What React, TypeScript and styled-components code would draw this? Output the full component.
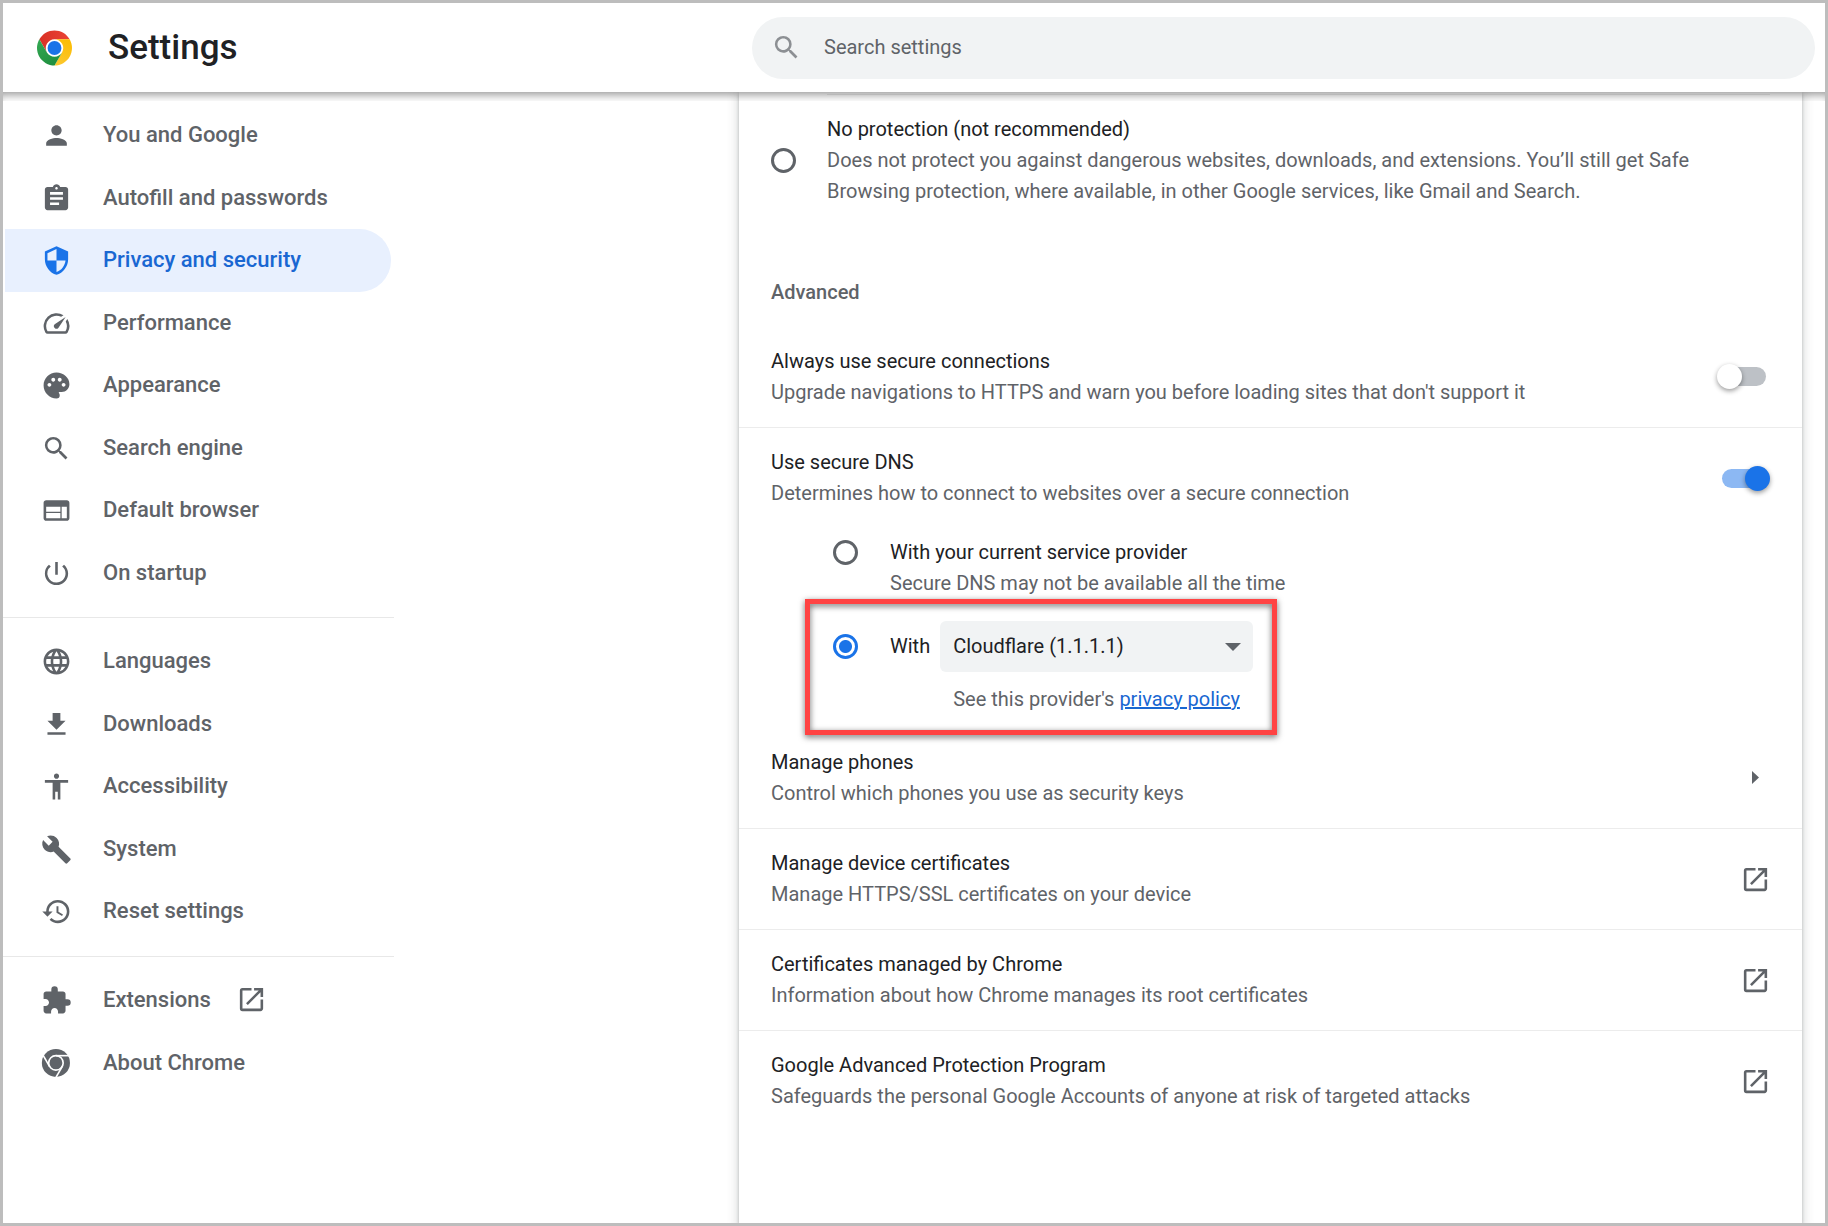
import React, { useState } from "react";
import styled, { createGlobalStyle } from "styled-components";
import type { IconType } from "react-icons";
import {
  MdAccessibility,
  MdAssignment,
  MdBuild,
  MdExtension,
  MdLanguage,
  MdOpenInNew,
  MdPalette,
  MdPerson,
  MdPowerSettingsNew,
  MdRestore,
  MdSearch,
  MdSecurity,
  MdSpeed,
  MdWeb,
} from "react-icons/md";

const color = {
  frame: "#bdbdbd",
  text: "#202124",
  muted: "#5f6368",
  blue: "#1a73e8",
  link: "#1967d2",
  selected: "#e8f0fe",
  field: "#f1f3f4",
  line: "#ececec",
  marker: "#ff4343",
};

const GlobalStyle = createGlobalStyle`
  *, *::before, *::after { box-sizing: border-box; }
  body {
    margin: 0;
    background: #fff;
    color: ${color.text};
    font: 400 20px/31px Roboto, "Liberation Sans", sans-serif;
  }
`;

const Page = styled.div`
  display: flex;
  flex-direction: column;
  height: 100vh;
  border: 3px solid ${color.frame};
  overflow: hidden;
`;

const Header = styled.header`
  position: relative;
  z-index: 1;
  flex: none;
  display: flex;
  align-items: center;
  justify-content: space-between;
  height: 89px;
  padding: 0 10px 0 34px;
  background: #fff;

  &::after {
    content: "";
    position: absolute;
    top: 100%;
    left: 0;
    right: 0;
    height: 9px;
    box-shadow: inset 0 8px 9px -5px rgba(0, 0, 0, 0.4);
    pointer-events: none;
  }
`;

const Brand = styled.div`
  display: flex;
  align-items: center;
  gap: 36px;
`;

const Title = styled.h1`
  margin: 0;
  font-size: 35px;
  line-height: 40px;
  font-weight: 500;
`;

const SearchField = styled.label`
  display: flex;
  align-items: center;
  gap: 22px;
  flex: 0 1 1063px;
  height: 62px;
  padding: 0 31px 0 19px;
  border-radius: 31px;
  background: ${color.field};
  color: #8c8f93;

  svg {
    flex: none;
  }
`;

const SearchInput = styled.input`
  flex: 1;
  min-width: 0;
  padding: 0;
  border: 0;
  outline: 0;
  background: transparent;
  color: ${color.text};
  font: inherit;

  &::placeholder {
    color: ${color.muted};
    opacity: 1;
  }
`;

const Body = styled.div`
  flex: 1;
  min-height: 0;
  display: flex;
  justify-content: space-between;
`;

const Sidebar = styled.nav`
  flex: none;
  width: 391px;
  padding-top: 12px;
`;

const MenuGroup = styled.ul`
  margin: 0;
  padding: 0 3px 0 2px;
  list-style: none;

  & + & {
    margin-top: 13px;
    padding-top: 12px;
    border-top: 1px solid #e8e8e8;
  }
`;

const MenuItem = styled.li`
  display: flex;
  height: 62px;

  &:nth-child(odd) {
    height: 63px;
  }
`;

const MenuLink = styled.a<{ $selected?: boolean }>`
  flex: 1;
  display: flex;
  align-items: center;
  gap: 31px;
  padding-left: 36px;
  border-radius: 0 32px 32px 0;
  background: ${(p) => (p.$selected ? color.selected : "transparent")};
  color: ${(p) => (p.$selected ? color.link : color.muted)};
  font-size: 22px;
  font-weight: 500;
  text-decoration: none;

  svg {
    flex: none;
    color: ${(p) => (p.$selected ? color.blue : color.muted)};
  }
`;

const MenuLabel = styled.span`
  display: flex;
  align-items: center;
  gap: 25px;
  padding-bottom: 2px;
`;

const Card = styled.main`
  flex: 0 1 1063px;
  margin-right: 23px;
  background: #fff;
  box-shadow: 0 2px 3px rgba(60, 64, 67, 0.3), 0 3px 9px 3px rgba(60, 64, 67, 0.15);
`;

const ProtectionOption = styled.label`
  display: flex;
  align-items: center;
  gap: 31px;
  padding: 2px 32px 0;
`;

const ProtectionText = styled.span`
  flex: 1;
  padding: 19px 48px 19px 0;
  border-top: 1px solid ${color.line};
`;

const Primary = styled.span`
  display: block;
  color: ${color.text};
`;

const Secondary = styled.span`
  display: block;
  color: ${color.muted};
`;

const Radio = styled.input`
  appearance: none;
  flex: none;
  width: 25px;
  height: 25px;
  margin: 0;
  border: 3px solid ${color.muted};
  border-radius: 50%;

  &:checked {
    border-color: ${color.blue};
    background: radial-gradient(circle, ${color.blue} 6px, transparent 7px);
  }
`;

const SectionTitle = styled.h2`
  margin: 51px 32px 18px;
  color: ${color.muted};
  font-size: 20px;
  line-height: 31px;
  font-weight: 500;
`;

const Row = styled.div<{ $divided?: boolean }>`
  display: flex;
  align-items: center;
  justify-content: space-between;
  width: 100%;
  min-height: 101px;
  padding: 0 31px 0 32px;
  border: solid ${color.line};
  border-width: ${(p) => (p.$divided ? "1px 0 0" : "0")};
  background: none;
  color: ${color.muted};
  font: inherit;
  text-align: left;
  text-decoration: none;

  svg {
    flex: none;
  }
`;

const Switch = styled.input`
  appearance: none;
  position: relative;
  flex: none;
  width: 44px;
  height: 19px;
  margin: 0 5px;
  border-radius: 10px;
  background: #bdc1c6;

  &::after {
    content: "";
    position: absolute;
    top: -3px;
    left: -5px;
    width: 25px;
    height: 25px;
    border-radius: 50%;
    background: #fff;
    box-shadow: 0 2px 5px rgba(0, 0, 0, 0.4);
  }

  &:checked {
    background: #8cb8f3;
  }

  &:checked::after {
    left: 23px;
    background: ${color.blue};
  }
`;

const ArrowSlot = styled.span`
  display: flex;
  justify-content: center;
  width: 31px;
`;

const DnsOptions = styled.div`
  display: flex;
  flex-direction: column;
  align-items: flex-start;
  gap: 22px;
  padding: 9px 32px 12px 94px;
`;

const DnsOption = styled.div`
  display: flex;
  align-items: flex-start;
  gap: 32px;
`;

const FirstLine = styled.span<{ $tall?: boolean }>`
  display: flex;
  align-items: center;
  height: ${(p) => (p.$tall ? "51px" : "31px")};
`;

const CustomDns = styled(DnsOption)`
  position: relative;

  /* Marker frame drawn round the chosen provider. */
  &::after {
    content: "";
    position: absolute;
    inset: -22px -24px -20px -28px;
    border: 5px solid ${color.marker};
    filter: drop-shadow(0 2px 3px rgba(0, 0, 0, 0.6));
    pointer-events: none;
  }
`;

const ProviderLabel = styled.label`
  display: flex;
  align-items: center;
  height: 51px;
  margin-right: -22px;
`;

const Provider = styled.div`
  display: flex;
  flex-direction: column;
  gap: 12px;
`;

const SelectBox = styled.div`
  position: relative;

  svg {
    position: absolute;
    top: 22px;
    right: 12px;
    pointer-events: none;
  }
`;

const ProviderSelect = styled.select`
  appearance: none;
  display: block;
  width: 313px;
  height: 51px;
  padding: 0 40px 0 13px;
  border: 0;
  border-radius: 6px;
  background: ${color.field};
  color: ${color.text};
  font: inherit;
`;

const PolicyNote = styled.p`
  margin: 0;
  padding-left: 13px;
  color: ${color.muted};

  a {
    color: ${color.link};
  }
`;

const ICON = 31;

const ChromeLogo = () => (
  <svg width="35" height="36" viewBox="0 0 48 48" aria-hidden="true">
    <defs>
      <linearGradient id="red" x1="3" y1="15" x2="45" y2="15" gradientUnits="userSpaceOnUse">
        <stop offset="0" stopColor="#d93025" />
        <stop offset="1" stopColor="#ea4335" />
      </linearGradient>
      <linearGradient id="yellow" x1="21" y1="48" x2="41" y2="12" gradientUnits="userSpaceOnUse">
        <stop offset="0" stopColor="#fcc934" />
        <stop offset="1" stopColor="#fbbc04" />
      </linearGradient>
      <linearGradient id="green" x1="27" y1="47" x2="6" y2="11" gradientUnits="userSpaceOnUse">
        <stop offset="0" stopColor="#1e8e3e" />
        <stop offset="1" stopColor="#34a853" />
      </linearGradient>
    </defs>
    <circle cx="24" cy="24" r="12" fill="#fff" />
    <path fill="url(#red)" d="M24 12h20.78a24 24 0 0 0-41.56 0L13.61 30A12 12 0 0 1 24 12z" />
    <path fill="url(#yellow)" d="M34.39 30 24 48a24 24 0 0 0 20.78-36H24a12 12 0 0 1 10.39 18z" />
    <path fill="url(#green)" d="M13.61 30 3.22 12A24 24 0 0 0 24 48l10.39-18a12 12 0 0 1-20.78 0z" />
    <circle cx="24" cy="24" r="9.5" fill="#1a73e8" />
  </svg>
);

const ChromeGlyph = () => (
  <svg width={ICON} height={ICON} viewBox="0 0 53 53" aria-hidden="true">
    <g transform="translate(1.5 1.5)">
      <circle cx="24" cy="24" r="24" fill="currentColor" />
      <g fill="none" stroke="#fff" strokeWidth="2.8">
        <circle cx="24" cy="24" r="12.4" />
        <path d="M24 11.6h26" />
        <path d="M24 11.6h26" transform="rotate(120 24 24)" />
        <path d="M24 11.6h26" transform="rotate(240 24 24)" />
      </g>
    </g>
  </svg>
);

const DownloadIcon = () => (
  <svg width={ICON} height={ICON} viewBox="0 0 24 24" fill="currentColor" aria-hidden="true">
    <path d="M19 9h-4V3H9v6H5l7 7 7-7zM5 18v2h14v-2H5z" />
  </svg>
);

type Entry = {
  label: string;
  icon: IconType | (() => React.ReactElement);
  external?: boolean;
};

const groups: Entry[][] = [
  [
    { label: "You and Google", icon: MdPerson },
    { label: "Autofill and passwords", icon: MdAssignment },
    { label: "Privacy and security", icon: MdSecurity },
    { label: "Performance", icon: MdSpeed },
    { label: "Appearance", icon: MdPalette },
    { label: "Search engine", icon: MdSearch },
    { label: "Default browser", icon: MdWeb },
    { label: "On startup", icon: MdPowerSettingsNew },
  ],
  [
    { label: "Languages", icon: MdLanguage },
    { label: "Downloads", icon: DownloadIcon },
    { label: "Accessibility", icon: MdAccessibility },
    { label: "System", icon: MdBuild },
    { label: "Reset settings", icon: MdRestore },
  ],
  [
    { label: "Extensions", icon: MdExtension, external: true },
    { label: "About Chrome", icon: ChromeGlyph },
  ],
];

const externalRows = [
  ["Manage device certificates", "Manage HTTPS/SSL certificates on your device"],
  ["Certificates managed by Chrome", "Information about how Chrome manages its root certificates"],
  [
    "Google Advanced Protection Program",
    "Safeguards the personal Google Accounts of anyone at risk of targeted attacks",
  ],
];

const RowText = ({ title, detail }: { title: string; detail: string }) => (
  <span>
    <Primary>{title}</Primary>
    <Secondary>{detail}</Secondary>
  </span>
);

export default function App() {
  const [selected, setSelected] = useState("Privacy and security");
  const [provider, setProvider] = useState("custom");

  return (
    <>
      <GlobalStyle />
      <Page>
        <Header>
          <Brand>
            <ChromeLogo />
            <Title>Settings</Title>
          </Brand>
          <SearchField>
            <MdSearch size={ICON} aria-hidden="true" />
            <SearchInput type="text" placeholder="Search settings" aria-label="Search settings" />
          </SearchField>
        </Header>
        <Body>
          <Sidebar>
            {groups.map((group) => (
              <MenuGroup key={group[0].label}>
                {group.map(({ label, icon: Icon, external }) => (
                  <MenuItem key={label}>
                    <MenuLink
                      href="#"
                      $selected={label === selected}
                      aria-current={label === selected ? "page" : undefined}
                      onClick={() => setSelected(label)}
                    >
                      <Icon size={ICON} />
                      <MenuLabel>
                        {label}
                        {external && <MdOpenInNew size={ICON} />}
                      </MenuLabel>
                    </MenuLink>
                  </MenuItem>
                ))}
              </MenuGroup>
            ))}
          </Sidebar>
          <Card>
            <ProtectionOption>
              <Radio type="radio" name="protection" />
              <ProtectionText>
                <Primary>No protection (not recommended)</Primary>
                <Secondary>
                  Does not protect you against dangerous websites, downloads, and extensions. You’ll
                  still get Safe Browsing protection, where available, in other Google services, like
                  Gmail and Search.
                </Secondary>
              </ProtectionText>
            </ProtectionOption>

            <SectionTitle>Advanced</SectionTitle>
            <Row as="label">
              <RowText
                title="Always use secure connections"
                detail="Upgrade navigations to HTTPS and warn you before loading sites that don't support it"
              />
              <Switch type="checkbox" role="switch" />
            </Row>
            <Row as="label" $divided>
              <RowText
                title="Use secure DNS"
                detail="Determines how to connect to websites over a secure connection"
              />
              <Switch type="checkbox" role="switch" defaultChecked />
            </Row>

            <DnsOptions>
              <DnsOption as="label">
                <FirstLine>
                  <Radio
                    type="radio"
                    name="dns"
                    checked={provider === "current"}
                    onChange={() => setProvider("current")}
                  />
                </FirstLine>
                <RowText
                  title="With your current service provider"
                  detail="Secure DNS may not be available all the time"
                />
              </DnsOption>
              <CustomDns>
                <FirstLine $tall>
                  <Radio
                    id="dns-custom"
                    type="radio"
                    name="dns"
                    checked={provider === "custom"}
                    onChange={() => setProvider("custom")}
                  />
                </FirstLine>
                <ProviderLabel htmlFor="dns-custom">With</ProviderLabel>
                <Provider>
                  <SelectBox>
                    <ProviderSelect aria-label="DNS provider">
                      <option>Cloudflare (1.1.1.1)</option>
                    </ProviderSelect>
                    <svg width="16" height="8" viewBox="0 0 16 8" fill={color.muted} aria-hidden="true">
                      <path d="M0 0h16L8 8z" />
                    </svg>
                  </SelectBox>
                  <PolicyNote>
                    See this provider's <a href="#">privacy policy</a>
                  </PolicyNote>
                </Provider>
              </CustomDns>
            </DnsOptions>

            <Row as="button">
              <RowText title="Manage phones" detail="Control which phones you use as security keys" />
              <ArrowSlot>
                <svg width="7" height="13" viewBox="0 0 7 13" fill={color.muted} aria-hidden="true">
                  <path d="M0 0l7 6.5L0 13z" />
                </svg>
              </ArrowSlot>
            </Row>
            {externalRows.map(([title, detail]) => (
              <Row as="a" href="#" $divided key={title}>
                <RowText title={title} detail={detail} />
                <MdOpenInNew size={ICON} aria-hidden="true" />
              </Row>
            ))}
          </Card>
        </Body>
      </Page>
    </>
  );
}
